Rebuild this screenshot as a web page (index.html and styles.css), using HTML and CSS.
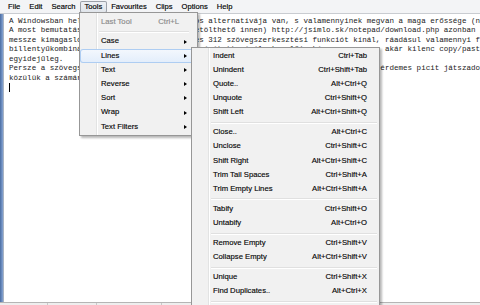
FILE: index.html
```html
<!DOCTYPE html>
<html lang="hu">
<head>
  <meta charset="UTF-8" />
  <title>Notepad - Tools</title>
  <link rel="stylesheet" href="styles.css">
</head>
<body>
  <div class="window">
    <div class="menubar">
      <span class="mb-item">File</span>
      <span class="mb-item">Edit</span>
      <span class="mb-item">Search</span>
      <span class="mb-item open">Tools</span>
      <span class="mb-item">Favourites</span>
      <span class="mb-item">Clips</span>
      <span class="mb-item">Options</span>
      <span class="mb-item">Help</span>
    </div>

    <div class="editor">
      <div class="frame"></div>
<pre class="text">A Windowsban helyet kapó Notepad-nak számos alternatívája van, s valamennyinek megvan a maga erőssége (nem is beszélve a gyengeségeiről).
A most bemutatásra kerülő programocska (letölthető innen) http://jsimlo.sk/notepad/download.php azonban
messze kimagasló, hiszen az elérhető összes 312 szövegszerkesztési funkciót kínál, ráadásul valamennyi funkciója
billentyűkombinációval is elérhető, és a beépített vágólapkezelője képes egyszerre akár kilenc copy/paste műveletet kezelni
egyidejűleg.
Persze a szövegszerkesztők közötti választás csak ízlés kérdése, így mindegyikkel érdemes picit játszadozni, hogy kiválaszthassuk
közülük a számára legmegfelelőbbet.
<span class="caret"></span></pre>
    </div>

    <div class="statusbar">
      <span class="pane p1"></span>
      <span class="pane p2"></span>
      <span class="pane p3"></span>
    </div>

    <!-- Tools menu -->
    <div class="menu main-menu">
      <div class="mi disabled"><span class="label">Last Tool</span><span class="key">Ctrl+L</span><span></span></div>
      <div class="sep"></div>
      <div class="mi"><span class="label">Case</span><span class="key"></span><span class="arrow"></span></div>
      <div class="mi active"><span class="label">Lines</span><span class="key"></span><span class="arrow"></span></div>
      <div class="mi"><span class="label">Text</span><span class="key"></span><span class="arrow"></span></div>
      <div class="mi"><span class="label">Reverse</span><span class="key"></span><span class="arrow"></span></div>
      <div class="mi"><span class="label">Sort</span><span class="key"></span><span class="arrow"></span></div>
      <div class="mi"><span class="label">Wrap</span><span class="key"></span><span class="arrow"></span></div>
      <div class="mi"><span class="label">Text Filters</span><span class="key"></span><span class="arrow"></span></div>
    </div>

    <!-- Lines submenu -->
    <div class="menu sub-menu">
      <div class="mi"><span class="label">Indent</span><span class="key">Ctrl+Tab</span><span></span></div>
      <div class="mi"><span class="label">Unindent</span><span class="key">Ctrl+Shift+Tab</span><span></span></div>
      <div class="mi"><span class="label">Quote..</span><span class="key">Alt+Ctrl+Q</span><span></span></div>
      <div class="mi"><span class="label">Unquote</span><span class="key">Ctrl+Shift+Q</span><span></span></div>
      <div class="mi"><span class="label">Shift Left</span><span class="key">Alt+Ctrl+Shift+Q</span><span></span></div>
      <div class="sep"></div>
      <div class="mi"><span class="label">Close..</span><span class="key">Alt+Ctrl+C</span><span></span></div>
      <div class="mi"><span class="label">Unclose</span><span class="key">Ctrl+Shift+C</span><span></span></div>
      <div class="mi"><span class="label">Shift Right</span><span class="key">Alt+Ctrl+Shift+C</span><span></span></div>
      <div class="mi"><span class="label">Trim Tail Spaces</span><span class="key">Ctrl+Shift+A</span><span></span></div>
      <div class="mi"><span class="label">Trim Empty Lines</span><span class="key">Alt+Ctrl+Shift+A</span><span></span></div>
      <div class="sep"></div>
      <div class="mi"><span class="label">Tabify</span><span class="key">Ctrl+Shift+O</span><span></span></div>
      <div class="mi"><span class="label">Untabify</span><span class="key">Alt+Ctrl+O</span><span></span></div>
      <div class="sep"></div>
      <div class="mi"><span class="label">Remove Empty</span><span class="key">Ctrl+Shift+V</span><span></span></div>
      <div class="mi"><span class="label">Collapse Empty</span><span class="key">Alt+Ctrl+Shift+V</span><span></span></div>
      <div class="sep"></div>
      <div class="mi"><span class="label">Unique</span><span class="key">Ctrl+Shift+X</span><span></span></div>
      <div class="mi"><span class="label">Find Duplicates..</span><span class="key">Alt+Ctrl+X</span><span></span></div>
      <div class="sep"></div>
    </div>
  </div>
</body>
</html>
```

FILE: styles.css
```css
/* alap */
*, *::before, *::after { box-sizing: border-box; }
body { margin: 0; width: 480px; height: 305px; overflow: hidden; background: #fff; }
.window { position: relative; height: 305px; display: flex; flex-direction: column; font-family: "Liberation Sans", Arial, sans-serif; color: #000; }

/* menüsor */
.menubar { height: 13px; flex: none; display: flex; align-items: flex-start; padding: 1px 0 0 3.6px; background: #f3f4f6; font-size: 7.6px; -webkit-text-stroke: 0.15px #000; }
.mb-item { height: 11.7px; line-height: 12px; padding: 0 4.5px; border-radius: 2px; }
.mb-item.open { background: linear-gradient(#eef1f5, #dfe4ea); box-shadow: inset 0 0 0 1px #9ca1a8; }

/* szerkesztő */
.editor { flex: 1; display: flex; border-top: 1px solid #c9ccd1; min-height: 0; }
.frame { width: 4px; flex: none; background: linear-gradient(90deg, #4a6da3, #86a4d2); border-right: 1px solid #a9b3c1; }
.text { flex: 1; margin: 0; padding: 3px 0 0 5px; font: 7.55px/9.45px "Liberation Mono", "Courier New", monospace; color: #1b1b1b; white-space: pre; overflow: hidden; }
.caret { display: inline-block; width: 1px; height: 9px; background: #000; vertical-align: -2px; }

/* állapotsor */
.statusbar { height: 3px; flex: none; display: flex; border-top: 1px solid #b5b5b5; background: #eeeeee; padding-left: 4px; }
.pane { border-right: 1px solid #c8c8c8; }
.p1 { width: 44px; }
.p2 { width: 49px; }
.p3 { width: 65px; }

/* legördülő menük */
.menu { position: absolute; background: #f1f1f1; border: 1px solid #979797; font-size: 7.7px; -webkit-text-stroke: 0.15px #1a1a1a; box-shadow: 2px 2px 2px rgba(0,0,0,0.28); }
.menu::before { content: ""; position: absolute; top: 0; bottom: 0; left: 16px; width: 1px; background: #e2e3e3; box-shadow: 1px 0 0 #fff; }
.main-menu { left: 79px; top: 12px; width: 119px; padding: 1.6px 6px 1px 0; }
.sub-menu { left: 191px; top: 47px; width: 189px; height: 270px; padding-top: 0.6px; }

.mi { position: relative; display: grid; grid-template-columns: 21px 1fr auto 12px; height: 14.2px; line-height: 14.2px; white-space: nowrap; }
.mi .label { grid-column: 2; }
.mi .key { grid-column: 3; text-align: right; }
.mi.disabled { color: #8b8b8b; -webkit-text-stroke-color: #8b8b8b; }
.main-menu .mi.active { margin-right: -6px; grid-template-columns: 21px 1fr auto 12px 6px; }
.mi.active { background: linear-gradient(#f4f8fd, #e2edfb); box-shadow: inset 0 0 0 1px #aecdf2; border-radius: 3px; }
.arrow { justify-self: center; align-self: center; width: 0; height: 0; border-left: 3px solid #000; border-top: 2.5px solid transparent; border-bottom: 2.5px solid transparent; }

.sep { position: relative; height: 5.7px; margin: 0 2px 0 19px; }
.sep::after { content: ""; position: absolute; left: 0; right: 0; top: 2.3px; height: 1px; background: #e0e0e0; box-shadow: 0 1px 0 #fff; }
```
